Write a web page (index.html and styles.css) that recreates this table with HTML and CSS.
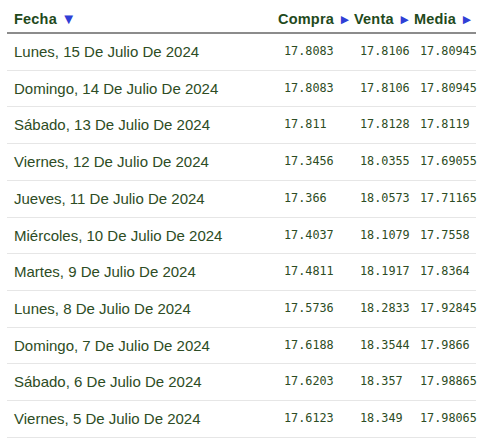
FILE: index.html
```html
<!DOCTYPE html>
<html lang="es">
<head>
    <meta charset="UTF-8">
    <meta name="viewport" content="width=device-width, initial-scale=1.0">
    <title>Tipo de cambio</title>
    <link rel="stylesheet" href="styles.css">
</head>
<body>

    <table class="rates">
        <thead>
            <tr>
                <th class="col-date">Fecha <span class="arrow arrow-down">▼</span></th>
                <th class="col-buy">Compra <span class="arrow">►</span></th>
                <th class="col-sell">Venta <span class="arrow">►</span></th>
                <th class="col-mid">Media <span class="arrow">►</span></th>
            </tr>
        </thead>
        <tbody>
            <tr><td>Lunes, 15 De Julio De 2024</td><td class="num">17.8083</td><td class="num">17.8106</td><td class="num">17.80945</td></tr>
            <tr><td>Domingo, 14 De Julio De 2024</td><td class="num">17.8083</td><td class="num">17.8106</td><td class="num">17.80945</td></tr>
            <tr><td>Sábado, 13 De Julio De 2024</td><td class="num">17.811</td><td class="num">17.8128</td><td class="num">17.8119</td></tr>
            <tr><td>Viernes, 12 De Julio De 2024</td><td class="num">17.3456</td><td class="num">18.0355</td><td class="num">17.69055</td></tr>
            <tr><td>Jueves, 11 De Julio De 2024</td><td class="num">17.366</td><td class="num">18.0573</td><td class="num">17.71165</td></tr>
            <tr><td>Miércoles, 10 De Julio De 2024</td><td class="num">17.4037</td><td class="num">18.1079</td><td class="num">17.7558</td></tr>
            <tr><td>Martes, 9 De Julio De 2024</td><td class="num">17.4811</td><td class="num">18.1917</td><td class="num">17.8364</td></tr>
            <tr><td>Lunes, 8 De Julio De 2024</td><td class="num">17.5736</td><td class="num">18.2833</td><td class="num">17.92845</td></tr>
            <tr><td>Domingo, 7 De Julio De 2024</td><td class="num">17.6188</td><td class="num">18.3544</td><td class="num">17.9866</td></tr>
            <tr><td>Sábado, 6 De Julio De 2024</td><td class="num">17.6203</td><td class="num">18.357</td><td class="num">17.98865</td></tr>
            <tr><td>Viernes, 5 De Julio De 2024</td><td class="num">17.6123</td><td class="num">18.349</td><td class="num">17.98065</td></tr>
        </tbody>
    </table>

</body>
</html>
```

FILE: styles.css
```css
body {
    margin: 0;
    background-color: #fff;
    font-family: "Liberation Sans", Arial, sans-serif;
}
.rates {
    border-collapse: collapse;
    margin-left: 7px;
    width: 469px;
    table-layout: fixed;
}
.rates th {
    text-align: left;
    font-size: 14.5px;
    font-weight: bold;
    color: #1f4a1c;
    line-height: 16px;
    height: 16px;
    padding: 11px 0 5px 0;
    border-bottom: 2px solid #8c8c8c;
    white-space: nowrap;
    letter-spacing: 0.2px;
}
.rates th.col-date {
    padding-left: 7px;
}
.col-date {
    width: 264px;
}
.col-buy {
    width: 76px;
}
.col-sell {
    width: 60px;
}
.col-mid {
    width: 62px;
}
.arrow {
    color: #2f3fd6;
    font-size: 13.5px;
    line-height: 0;
    letter-spacing: 0;
}
.arrow-down {
    font-size: 15px;
}
.rates td {
    font-size: 15px;
    color: #2d4c24;
    line-height: 17.7px;
    padding: 9px 0 9px 7px;
    border-bottom: 1px solid #e6e6e6;
    white-space: nowrap;
}
.rates td.num {
    font-family: "DejaVu Sans Mono", "Liberation Mono", monospace;
    font-size: 11.8px;
    padding-left: 6px;
}
```
